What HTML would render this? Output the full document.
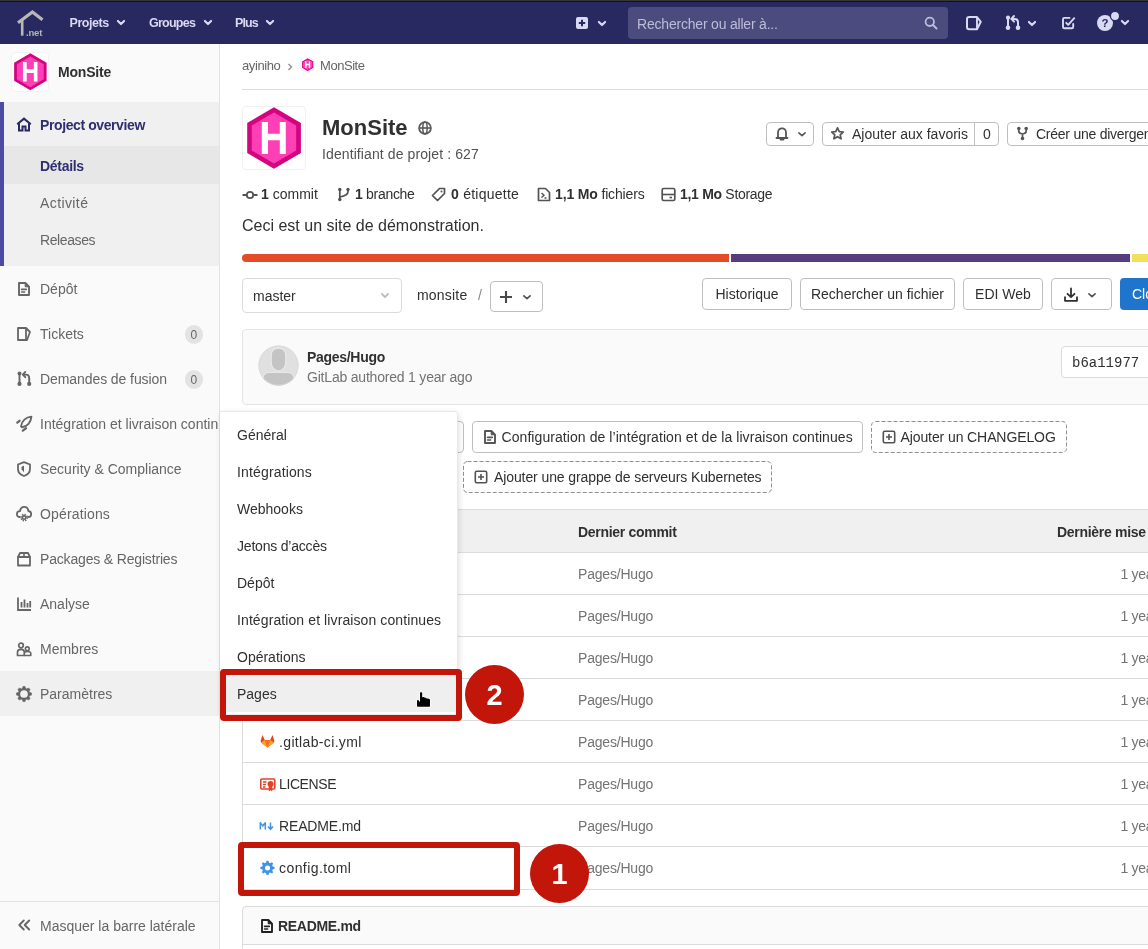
<!DOCTYPE html>
<html><head><meta charset="utf-8">
<style>
*{box-sizing:border-box;margin:0;padding:0}
html,body{width:1148px;height:949px;overflow:hidden;background:#fff;font-family:"Liberation Sans",sans-serif;font-size:14px;color:#303030;position:relative}
#w{position:absolute;left:0;top:0;width:1148px;height:949px;will-change:transform}
.a{position:absolute;white-space:nowrap}
svg.a{overflow:visible}
</style></head><body>

<div id="w">
<div class="a" style="left:0px;top:0px;width:1148px;height:1px;background:#363636"></div>
<div class="a" style="left:0px;top:1px;width:1148px;height:1px;background:#121212"></div>
<div class="a" style="left:0px;top:2px;width:1148px;height:42px;background:#292961"></div>
<svg class="a" style="left:15px;top:9px;" width="30" height="30" viewBox="0 0 30 30"><path d="M3 13.8 L17.4 3 L27.5 10.8" fill="none" stroke="#b8b8b8" stroke-width="3.2" stroke-linejoin="miter"/><path d="M7.2 11 L7.2 26.7" fill="none" stroke="#b8b8b8" stroke-width="2.6"/></svg>
<div class="a" style="left:26px;top:27.66px;font-size:9.5px;line-height:9.5px;font-weight:bold;color:#b5b5b5;letter-spacing:-0.2px">.net</div>
<div class="a" style="left:69.5px;top:17.42px;font-size:12.5px;line-height:12.5px;font-weight:bold;color:#d9d9f2;letter-spacing:-0.45px">Projets</div>
<svg class="a" style="left:116px;top:19px;" width="10" height="7" viewBox="0 0 10 7"><path d="M1.9 1.9 L5.0 5.1 L8.1 1.9" fill="none" stroke="#d9d9f2" stroke-width="2.1" stroke-linecap="round" stroke-linejoin="round"/></svg>
<div class="a" style="left:149px;top:17.42px;font-size:12.5px;line-height:12.5px;font-weight:bold;color:#d9d9f2;letter-spacing:-0.75px">Groupes</div>
<svg class="a" style="left:203px;top:19px;" width="10" height="7" viewBox="0 0 10 7"><path d="M1.9 1.9 L5.0 5.1 L8.1 1.9" fill="none" stroke="#d9d9f2" stroke-width="2.1" stroke-linecap="round" stroke-linejoin="round"/></svg>
<div class="a" style="left:235px;top:17.42px;font-size:12.5px;line-height:12.5px;font-weight:bold;color:#d9d9f2;letter-spacing:-0.9px">Plus</div>
<svg class="a" style="left:265px;top:19px;" width="10" height="7" viewBox="0 0 10 7"><path d="M1.9 1.9 L5.0 5.1 L8.1 1.9" fill="none" stroke="#d9d9f2" stroke-width="2.1" stroke-linecap="round" stroke-linejoin="round"/></svg>
<svg class="a" style="left:576px;top:17px;" width="12" height="12" viewBox="0 0 12 12"><rect x="0" y="0" width="12" height="12" rx="2" fill="#d9d9f2"/><path d="M6 2.8 V9.2 M2.8 6 H9.2" stroke="#292961" stroke-width="2"/></svg>
<svg class="a" style="left:597px;top:19.5px;" width="10" height="7" viewBox="0 0 10 7"><path d="M1.9 1.9 L5.0 5.1 L8.1 1.9" fill="none" stroke="#d9d9f2" stroke-width="2.1" stroke-linecap="round" stroke-linejoin="round"/></svg>
<div class="a" style="left:628px;top:7px;width:320px;height:32px;background:#4c4b7e;border-radius:4px"></div>
<div class="a" style="left:637px;top:16.65px;font-size:14px;line-height:14px;font-weight:normal;color:#bdbcd9;letter-spacing:-0.2px">Rechercher ou aller à...</div>
<svg class="a" style="left:924px;top:16px;" width="14" height="14" viewBox="0 0 14 14"><circle cx="5.8" cy="5.8" r="4.2" fill="none" stroke="#bdbcd9" stroke-width="1.8"/><path d="M9 9 L12.5 12.5" stroke="#bdbcd9" stroke-width="2" stroke-linecap="round"/></svg>
<svg class="a" style="left:966px;top:16px;" width="16" height="15" viewBox="0 0 16 15"><path d="M3.2 1 H11 L14.8 5.8 L11 13.2 H3.2 Q1 13.2 1 11 V3.2 Q1 1 3.2 1 Z" fill="none" stroke="#d9d9f2" stroke-width="2" stroke-linejoin="round"/><path d="M11 1.5 V13" stroke="#d9d9f2" stroke-width="1.9"/></svg>
<svg class="a" style="left:1004px;top:15px;" width="18" height="16" viewBox="0 0 18 16"><circle cx="4" cy="2.7" r="2.1" fill="#d9d9f2"/><path d="M4 2.7 V13" stroke="#d9d9f2" stroke-width="2"/><circle cx="4" cy="12.8" r="2.3" fill="#d9d9f2"/><path d="M10 1 L7.3 3.9 L10 6.6" fill="none" stroke="#d9d9f2" stroke-width="2" stroke-linecap="round" stroke-linejoin="round"/><path d="M8 3.9 H10.5 Q14 3.9 14 7.5 V12.8" fill="none" stroke="#d9d9f2" stroke-width="2"/><circle cx="14" cy="12.8" r="2.3" fill="#d9d9f2"/></svg>
<svg class="a" style="left:1027px;top:19.5px;" width="10" height="7" viewBox="0 0 10 7"><path d="M1.9 1.9 L5.0 5.1 L8.1 1.9" fill="none" stroke="#d9d9f2" stroke-width="2.1" stroke-linecap="round" stroke-linejoin="round"/></svg>
<svg class="a" style="left:1061px;top:16px;" width="16" height="15" viewBox="0 0 16 15"><path d="M8.5 1.9 H3.3 Q2 1.9 2 3.2 V10.9 Q2 12.2 3.3 12.2 H10.9 Q12.2 12.2 12.2 10.9 V8" fill="none" stroke="#d9d9f2" stroke-width="1.9" stroke-linecap="round"/><path d="M5.2 6.8 L7.2 8.8 L13.2 2.2" fill="none" stroke="#d9d9f2" stroke-width="1.9" stroke-linecap="round" stroke-linejoin="round"/></svg>
<svg class="a" style="left:1096px;top:11px;" width="25" height="20" viewBox="0 0 25 20"><circle cx="9" cy="12" r="8" fill="#d9d9f2"/><text x="9" y="16.2" text-anchor="middle" font-family="Liberation Sans" font-weight="bold" font-size="11.5" fill="#292961">?</text><circle cx="19" cy="5" r="4.6" fill="#d9d9f2" stroke="#292961" stroke-width="1.3"/></svg>
<svg class="a" style="left:1120px;top:19px;" width="10" height="7" viewBox="0 0 10 7"><path d="M1.9 1.9 L5.0 5.1 L8.1 1.9" fill="none" stroke="#d9d9f2" stroke-width="2.1" stroke-linecap="round" stroke-linejoin="round"/></svg>
<div class="a" style="left:0px;top:44px;width:220px;height:905px;background:#fafafa;border-right:1px solid #e3e3e3"></div>
<div class="a" style="left:10.5px;top:52.2px;width:38.7px;height:39.5px;background:#fff;border:1px solid #f2f2f2;border-radius:4px"></div>
<svg class="a" style="left:10.5px;top:52.2px;overflow:hidden" width="38.7" height="39.5" viewBox="0 0 64 64"><polygon points="32,1.2 58.9,17 58.9,47 32,62.8 5.2,47 5.2,17" fill="#d3047f"/><polygon points="32,6.6 54.2,19.6 54.2,44.6 32,57.6 9.8,44.6 9.8,19.6" fill="#ff3fb5"/><path d="M19.8 15.9 H26 V27.7 H37.8 V15.9 H43.8 V48.1 H37.8 V34.2 H26 V48.1 H19.8 Z" fill="#fff"/></svg>
<div class="a" style="left:58px;top:65.35px;font-size:14px;line-height:14px;font-weight:bold;color:#303030;letter-spacing:-0.2px">MonSite</div>
<div class="a" style="left:0px;top:102px;width:219px;height:164px;background:#f0f0f0"></div>
<div class="a" style="left:0px;top:102px;width:4px;height:164px;background:#4b4ba3"></div>
<div class="a" style="left:4px;top:146px;width:215px;height:38px;background:#e7e7e7"></div>
<svg class="a" style="left:16px;top:117px;" width="16" height="15" viewBox="0 0 16 15"><path d="M1.2 7.2 L8 1.6 L14.8 7.2" fill="none" stroke="#292961" stroke-width="2.1" stroke-linejoin="miter"/><path d="M3 6.2 V13.5 H6.5 V9.5 H9.5 V13.5 H13 V6.2" fill="none" stroke="#292961" stroke-width="2"/></svg>
<div class="a" style="left:40px;top:118.45px;font-size:14px;line-height:14px;font-weight:bold;color:#2e2e70;letter-spacing:-0.4px">Project overview</div>
<div class="a" style="left:40px;top:158.95px;font-size:14px;line-height:14px;font-weight:bold;color:#2e2e70;letter-spacing:-0.3px">Détails</div>
<div class="a" style="left:40px;top:195.95px;font-size:14px;line-height:14px;font-weight:normal;color:#666;letter-spacing:0.4px">Activité</div>
<div class="a" style="left:40px;top:232.95px;font-size:14px;line-height:14px;font-weight:normal;color:#666;letter-spacing:-0.4px">Releases</div>
<div class="a" style="left:0px;top:671px;width:219px;height:45px;background:#f0f0f0"></div>
<div class="a" style="left:40px;top:282.15px;font-size:14px;line-height:14px;font-weight:normal;color:#666;letter-spacing:0px;">Dépôt</div>
<div class="a" style="left:40px;top:327.15px;font-size:14px;line-height:14px;font-weight:normal;color:#666;letter-spacing:0px;">Tickets</div>
<div class="a" style="left:40px;top:372.15px;font-size:14px;line-height:14px;font-weight:normal;color:#666;letter-spacing:-0.08px;">Demandes de fusion</div>
<div class="a" style="left:40px;top:417.15px;font-size:14px;line-height:14px;font-weight:normal;color:#666;letter-spacing:0px;width:179px;height:20px;overflow:hidden">Intégration et livraison continues</div>
<div class="a" style="left:40px;top:462.15px;font-size:14px;line-height:14px;font-weight:normal;color:#666;letter-spacing:0px;">Security &amp; Compliance</div>
<div class="a" style="left:40px;top:507.15px;font-size:14px;line-height:14px;font-weight:normal;color:#666;letter-spacing:0.15px;">Opérations</div>
<div class="a" style="left:40px;top:552.15px;font-size:14px;line-height:14px;font-weight:normal;color:#666;letter-spacing:-0.17px;">Packages &amp; Registries</div>
<div class="a" style="left:40px;top:597.15px;font-size:14px;line-height:14px;font-weight:normal;color:#666;letter-spacing:0px;">Analyse</div>
<div class="a" style="left:40px;top:642.15px;font-size:14px;line-height:14px;font-weight:normal;color:#666;letter-spacing:0px;">Membres</div>
<div class="a" style="left:40px;top:687.15px;font-size:14px;line-height:14px;font-weight:normal;color:#666;letter-spacing:0px;">Paramètres</div>
<svg class="a" style="left:18px;top:282px;" width="12" height="14" viewBox="0 0 12 14"><path d="M1 1 H7.4 L11 4.6 V13 H1 Z" fill="none" stroke="#666" stroke-width="1.9" stroke-linejoin="round"/><path d="M7.2 1 V4.8 H11 Z" fill="#666" stroke="#666" stroke-width="1" stroke-linejoin="round"/><path d="M3.6 7.4 H8.3 M3.6 10 H6.6" stroke="#666" stroke-width="1.6" stroke-linecap="round"/></svg>
<svg class="a" style="left:16px;top:326px;" width="16" height="16" viewBox="0 0 16 16"><path d="M2 2 H10 L14 6 L11 14 H2 Z" fill="none" stroke="#666" stroke-width="1.8" stroke-linejoin="round"/><path d="M10 2 V14" stroke="#666" stroke-width="1.8"/></svg>
<svg class="a" style="left:16px;top:371px;" width="16" height="16" viewBox="0 0 16 16"><circle cx="3.5" cy="2.6" r="2" fill="#666"/><path d="M3.5 2.6 V13" stroke="#666" stroke-width="1.9"/><circle cx="3.5" cy="12.9" r="2.1" fill="#666"/><path d="M9.3 0.9 L6.8 3.6 L9.3 6.2" fill="none" stroke="#666" stroke-width="1.9" stroke-linecap="round" stroke-linejoin="round"/><path d="M7.5 3.6 H9.8 Q13.2 3.6 13.2 7 V12.9" fill="none" stroke="#666" stroke-width="1.9"/><circle cx="13.2" cy="12.9" r="2.1" fill="#666"/></svg>
<svg class="a" style="left:16px;top:416px;" width="16" height="16" viewBox="0 0 16 16"><path d="M15.4 0.6 C10 1 5.6 5 5 10.3 L6 11.3 C11.2 10.7 15 6.2 15.4 0.6 Z" fill="none" stroke="#666" stroke-width="1.9" stroke-linejoin="round"/><path d="M1.3 6.6 L3.6 4.8 M6.8 14.6 L10 12.3" stroke="#666" stroke-width="2.3" stroke-linecap="round"/></svg>
<svg class="a" style="left:16px;top:461px;" width="16" height="16" viewBox="0 0 16 16"><path d="M8 1.2 L14 3.5 V8 C14 11.5 11 14 8 15 C5 14 2 11.5 2 8 V3.5 Z" fill="none" stroke="#666" stroke-width="1.8" stroke-linejoin="round"/><path d="M8 4.6 V11.2 L5.6 8.6 L5.4 6 Z" fill="#666"/></svg>
<svg class="a" style="left:16px;top:506px;" width="16" height="16" viewBox="0 0 16 16"><path d="M3.8 11 C1.7 11 0.9 9.6 0.9 8.2 C0.9 6.5 2.1 5.2 3.9 5.2 C4.4 2.5 6.1 0.9 8.2 0.9 C10.4 0.9 12.1 2.5 12.4 5 C14.2 5.2 15.2 6.5 15.2 8.2 C15.2 9.7 14.4 11 12.3 11" fill="none" stroke="#666" stroke-width="1.8" stroke-linecap="round"/><circle cx="8.1" cy="11.6" r="1.7" fill="none" stroke="#666" stroke-width="1.6"/><circle cx="8.1" cy="11.6" r="3.1" fill="none" stroke="#666" stroke-width="1.5" stroke-dasharray="1.4 1.03"/></svg>
<svg class="a" style="left:16px;top:551px;" width="16" height="16" viewBox="0 0 16 16"><path d="M2 6 H14 V14.5 H2 Z" fill="none" stroke="#666" stroke-width="1.8" stroke-linejoin="round"/><path d="M2 6 L4 2 H12 L14 6" fill="none" stroke="#666" stroke-width="1.8" stroke-linejoin="round"/><path d="M8 2 V6" stroke="#666" stroke-width="1.6"/></svg>
<svg class="a" style="left:16px;top:596px;" width="16" height="16" viewBox="0 0 16 16"><path d="M2 1.5 V14 H15" fill="none" stroke="#666" stroke-width="1.8"/><path d="M5.5 6 V11.5 M8.5 3.5 V11.5 M11.5 7 V11.5 M14.2 5 V11.5" stroke="#666" stroke-width="1.8"/></svg>
<svg class="a" style="left:16px;top:641px;" width="16" height="16" viewBox="0 0 16 16"><circle cx="5" cy="4.5" r="2.3" fill="none" stroke="#666" stroke-width="1.7"/><circle cx="11.3" cy="7.8" r="1.9" fill="none" stroke="#666" stroke-width="1.6"/><path d="M1.5 14.5 V11 C1.5 9.3 2.8 8.3 5 8.3 C7 8.3 8.3 9.3 8.3 11 V14.5 Z" fill="none" stroke="#666" stroke-width="1.7" stroke-linejoin="round"/><path d="M8.3 14.5 H14.8 V12.5 C14.8 11 13.5 10.5 11.5 10.5 C10.2 10.5 9.2 10.8 8.6 11.3" fill="none" stroke="#666" stroke-width="1.6" stroke-linejoin="round"/></svg>
<svg class="a" style="left:16px;top:686px;" width="16" height="16" viewBox="0 0 16 16"><path d="M6.22 3.11 L6.94 0.47 L9.06 0.47 L9.78 3.11 L10.20 3.29 L12.57 1.93 L14.07 3.43 L12.71 5.80 L12.89 6.22 L15.53 6.94 L15.53 9.06 L12.89 9.78 L12.71 10.20 L14.07 12.57 L12.57 14.07 L10.20 12.71 L9.78 12.89 L9.06 15.53 L6.94 15.53 L6.22 12.89 L5.80 12.71 L3.43 14.07 L1.93 12.57 L3.29 10.20 L3.11 9.78 L0.47 9.06 L0.47 6.94 L3.11 6.22 L3.29 5.80 L1.93 3.43 L3.43 1.93 L5.80 3.29 Z" fill="#666" stroke="#666" stroke-width="0.6" stroke-linejoin="round"/><circle cx="8" cy="8" r="4.9" fill="none" stroke="#666" stroke-width="2.1"/><circle cx="8" cy="8" r="3.85" fill="#f0f0f0"/></svg>
<div class="a" style="left:185px;top:325px;width:18px;height:19px;background:#e3e3e3;border-radius:9px"></div>
<div class="a" style="left:190.5px;top:328.84px;font-size:12px;line-height:12px;font-weight:normal;color:#666;">0</div>
<div class="a" style="left:185px;top:370px;width:18px;height:19px;background:#e3e3e3;border-radius:9px"></div>
<div class="a" style="left:190.5px;top:373.84px;font-size:12px;line-height:12px;font-weight:normal;color:#666;">0</div>
<div class="a" style="left:0px;top:901px;width:219px;height:1px;background:#e3e3e3"></div>
<svg class="a" style="left:17px;top:918px;" width="14" height="14" viewBox="0 0 14 14"><path d="M6.8 2.5 L2.3 7 L6.8 11.5 M12.2 2.5 L7.7 7 L12.2 11.5" fill="none" stroke="#666" stroke-width="1.9" stroke-linecap="round" stroke-linejoin="round"/></svg>
<div class="a" style="left:40px;top:919.15px;font-size:14px;line-height:14px;font-weight:normal;color:#666;">Masquer la barre latérale</div>
<div class="a" style="left:242px;top:59.00px;font-size:13px;line-height:13px;font-weight:normal;color:#666;letter-spacing:-0.4px">ayiniho</div>
<svg class="a" style="left:286px;top:63px;" width="8" height="8" viewBox="0 0 8 8"><path d="M2.5 1 L5.5 4 L2.5 7" fill="none" stroke="#888" stroke-width="1.2"/></svg>
<svg class="a" style="left:299px;top:56px;" width="17" height="17" viewBox="0 0 17 17"><circle cx="8.4" cy="8.5" r="7.6" fill="#fff" stroke="#ececec" stroke-width="0.8"/></svg>
<svg class="a" style="left:300.7px;top:57.8px;overflow:hidden" width="13.4" height="13.4" viewBox="0 0 64 64"><polygon points="32,1.2 58.9,17 58.9,47 32,62.8 5.2,47 5.2,17" fill="#d3047f"/><polygon points="32,6.6 54.2,19.6 54.2,44.6 32,57.6 9.8,44.6 9.8,19.6" fill="#ff3fb5"/><path d="M19.8 15.9 H26 V27.7 H37.8 V15.9 H43.8 V48.1 H37.8 V34.2 H26 V48.1 H19.8 Z" fill="#fff"/></svg>
<div class="a" style="left:320px;top:59.00px;font-size:13px;line-height:13px;font-weight:normal;color:#666;letter-spacing:-0.45px">MonSite</div>
<div class="a" style="left:242px;top:89px;width:906px;height:1px;background:#dcdcdc"></div>
<div class="a" style="left:242px;top:106px;width:64px;height:64px;background:#fff;border:1px solid #f0f0f0;border-radius:4px"></div>
<svg class="a" style="left:242px;top:106px;overflow:hidden" width="64" height="64" viewBox="0 0 64 64"><polygon points="32,1.2 58.9,17 58.9,47 32,62.8 5.2,47 5.2,17" fill="#d3047f"/><polygon points="32,6.6 54.2,19.6 54.2,44.6 32,57.6 9.8,44.6 9.8,19.6" fill="#ff3fb5"/><path d="M19.8 15.9 H26 V27.7 H37.8 V15.9 H43.8 V48.1 H37.8 V34.2 H26 V48.1 H19.8 Z" fill="#fff"/></svg>
<div class="a" style="left:322px;top:116.58px;font-size:22px;line-height:22px;font-weight:bold;color:#303030;">MonSite</div>
<svg class="a" style="left:418px;top:121px;" width="14" height="14" viewBox="0 0 14 14"><circle cx="7" cy="7" r="5.9" fill="none" stroke="#5a5a5a" stroke-width="1.8"/><path d="M1.5 7 H12.5" stroke="#5a5a5a" stroke-width="1.6"/><ellipse cx="7" cy="7" rx="2.2" ry="5.9" fill="none" stroke="#5a5a5a" stroke-width="1.5"/></svg>
<div class="a" style="left:322px;top:147.15px;font-size:14px;line-height:14px;font-weight:normal;color:#525252;letter-spacing:0.1px">Identifiant de projet : 627</div>
<div class="a" style="left:766px;top:122px;width:48px;height:24px;background:#fff;border:1px solid #bfbfbf;border-radius:4px"></div>
<svg class="a" style="left:775px;top:126px;" width="14" height="15" viewBox="0 0 14 15"><path d="M3 11 V6.5 C3 4 4.8 2.3 7 2.3 C9.2 2.3 11 4 11 6.5 V11 L12.5 12 H1.5 Z" fill="none" stroke="#555" stroke-width="1.8" stroke-linejoin="round"/><path d="M5.5 13.5 H8.5" stroke="#555" stroke-width="1.8" stroke-linecap="round"/></svg>
<svg class="a" style="left:797px;top:131px;" width="10" height="6.5" viewBox="0 0 10 6.5"><path d="M1.9 1.9 L5.0 4.6 L8.1 1.9" fill="none" stroke="#555" stroke-width="1.6" stroke-linecap="round" stroke-linejoin="round"/></svg>
<div class="a" style="left:822px;top:122px;width:177px;height:24px;background:#fff;border:1px solid #bfbfbf;border-radius:4px"></div>
<div class="a" style="left:974px;top:122px;width:1px;height:24px;background:#bfbfbf"></div>
<svg class="a" style="left:830px;top:126px;" width="15" height="15" viewBox="0 0 15 15"><path d="M7.5 1.8 L9.3 5.6 L13.3 6 L10.2 8.8 L11.1 12.8 L7.5 10.7 L3.9 12.8 L4.8 8.8 L1.7 6 L5.7 5.6 Z" fill="none" stroke="#555" stroke-width="1.7" stroke-linejoin="round"/></svg>
<div class="a" style="left:852px;top:126.75px;font-size:14px;line-height:14px;font-weight:normal;color:#303030;letter-spacing:0px">Ajouter aux favoris</div>
<div class="a" style="left:983px;top:126.75px;font-size:14px;line-height:14px;font-weight:normal;color:#303030;">0</div>
<div class="a" style="left:1007px;top:122px;width:153px;height:24px;background:#fff;border:1px solid #bfbfbf;border-radius:4px"></div>
<svg class="a" style="left:1016px;top:126px;" width="13" height="15" viewBox="0 0 13 15"><circle cx="2.8" cy="2.5" r="1.8" fill="#555"/><circle cx="10.2" cy="2.5" r="1.8" fill="#555"/><circle cx="6.5" cy="12.5" r="1.8" fill="#555"/><path d="M2.8 3 V5 Q2.8 7 5 7.5 L6.5 8 L8 7.5 Q10.2 7 10.2 5 V3 M6.5 8 V12" fill="none" stroke="#555" stroke-width="1.7"/></svg>
<div class="a" style="left:1036px;top:126.75px;font-size:14px;line-height:14px;font-weight:normal;color:#303030;letter-spacing:-0.25px">Créer une divergence</div>
<svg class="a" style="left:242px;top:188.5px;" width="16" height="12" viewBox="0 0 16 12"><circle cx="8" cy="6" r="3.2" fill="none" stroke="#525252" stroke-width="1.8"/><path d="M0.5 6 H4.8 M11.2 6 H15.5" stroke="#525252" stroke-width="1.8"/></svg>
<div class="a" style="left:261px;top:186.95px;font-size:14px;line-height:14px;font-weight:normal;color:#303030;"><b>1</b> commit</div>
<svg class="a" style="left:337px;top:186.5px;" width="14" height="15" viewBox="0 0 14 15"><circle cx="2.8" cy="2.5" r="1.7" fill="#525252"/><circle cx="2.8" cy="12.5" r="1.7" fill="#525252"/><circle cx="11" cy="2.5" r="1.7" fill="#525252"/><path d="M2.8 3 V12 M11 3 V4.5 Q11 8.5 3 10" fill="none" stroke="#525252" stroke-width="1.7"/></svg>
<div class="a" style="left:355px;top:186.95px;font-size:14px;line-height:14px;font-weight:normal;color:#303030;letter-spacing:-0.3px"><b>1</b> branche</div>
<svg class="a" style="left:431px;top:187px;" width="15" height="15" viewBox="0 0 15 15"><path d="M8.5 1.5 H13.5 V6.5 L6.5 13.5 L1.5 8.5 Z" fill="none" stroke="#525252" stroke-width="1.7" stroke-linejoin="round"/><circle cx="10.5" cy="4.5" r="1" fill="#525252"/></svg>
<div class="a" style="left:451px;top:186.95px;font-size:14px;line-height:14px;font-weight:normal;color:#303030;letter-spacing:0.25px"><b>0</b> étiquette</div>
<svg class="a" style="left:537px;top:187px;" width="14" height="15" viewBox="0 0 14 15"><path d="M1.5 1.5 H8.5 L12.5 5.5 V13.5 H1.5 Z" fill="none" stroke="#525252" stroke-width="1.7" stroke-linejoin="round"/><path d="M4.5 6 L7 8.3 L4.5 10.6 M7.5 11 H9.5" fill="none" stroke="#525252" stroke-width="1.4"/></svg>
<div class="a" style="left:555px;top:186.95px;font-size:14px;line-height:14px;font-weight:normal;color:#303030;letter-spacing:-0.15px"><b>1,1 Mo</b> fichiers</div>
<svg class="a" style="left:661px;top:187px;" width="15" height="15" viewBox="0 0 15 15"><rect x="1.2" y="1.5" width="12.6" height="12" rx="1.5" fill="none" stroke="#525252" stroke-width="1.7"/><path d="M1.5 7.5 H13.5" stroke="#525252" stroke-width="1.6"/><path d="M8.5 10.5 H11" stroke="#525252" stroke-width="1.6"/></svg>
<div class="a" style="left:680px;top:186.95px;font-size:14px;line-height:14px;font-weight:normal;color:#303030;letter-spacing:-0.3px"><b>1,1 Mo</b> Storage</div>
<div class="a" style="left:242px;top:218.46px;font-size:16px;line-height:16px;font-weight:normal;color:#303030;">Ceci est un site de démonstration.</div>
<div class="a" style="left:242px;top:254px;width:487px;height:8px;background:#e34c26;border-radius:4px 0 0 4px"></div>
<div class="a" style="left:731px;top:254px;width:399px;height:8px;background:#563d7c"></div>
<div class="a" style="left:1132px;top:254px;width:16px;height:8px;background:#f1e05a"></div>
<div class="a" style="left:242px;top:278px;width:160px;height:35px;background:#fff;border:1px solid #dbdbdb;border-radius:4px"></div>
<div class="a" style="left:253px;top:288.85px;font-size:14px;line-height:14px;font-weight:normal;color:#303030;">master</div>
<svg class="a" style="left:380px;top:292px;" width="10" height="7" viewBox="0 0 10 7"><path d="M1.9 1.9 L5.0 5.1 L8.1 1.9" fill="none" stroke="#bbb" stroke-width="1.9" stroke-linecap="round" stroke-linejoin="round"/></svg>
<div class="a" style="left:417px;top:288.15px;font-size:14px;line-height:14px;font-weight:normal;color:#303030;letter-spacing:0.2px">monsite</div>
<div class="a" style="left:478px;top:288.15px;font-size:14px;line-height:14px;font-weight:normal;color:#888;">/</div>
<div class="a" style="left:490px;top:281px;width:53px;height:31px;background:#fff;border:1px solid #bfbfbf;border-radius:4px"></div>
<svg class="a" style="left:499px;top:290px;" width="14" height="14" viewBox="0 0 14 14"><path d="M7 1 V13 M1 7 H13" stroke="#4a4a4a" stroke-width="2.1"/></svg>
<svg class="a" style="left:522px;top:293.5px;" width="10" height="6.5" viewBox="0 0 10 6.5"><path d="M1.9 1.9 L5.0 4.6 L8.1 1.9" fill="none" stroke="#555" stroke-width="1.8" stroke-linecap="round" stroke-linejoin="round"/></svg>
<div class="a" style="left:702px;top:278px;width:90px;height:32px;background:#fff;border:1px solid #bfbfbf;border-radius:4px"></div>
<div class="a" style="left:702px;top:286.85px;font-size:14px;line-height:14px;font-weight:normal;color:#303030;width:90px;text-align:center">Historique</div>
<div class="a" style="left:800px;top:278px;width:155px;height:32px;background:#fff;border:1px solid #bfbfbf;border-radius:4px"></div>
<div class="a" style="left:800px;top:286.85px;font-size:14px;line-height:14px;font-weight:normal;color:#303030;width:155px;text-align:center">Rechercher un fichier</div>
<div class="a" style="left:963px;top:278px;width:80px;height:32px;background:#fff;border:1px solid #bfbfbf;border-radius:4px"></div>
<div class="a" style="left:963px;top:286.85px;font-size:14px;line-height:14px;font-weight:normal;color:#303030;width:80px;text-align:center">EDI Web</div>
<div class="a" style="left:1051px;top:278px;width:61px;height:32px;background:#fff;border:1px solid #bfbfbf;border-radius:4px"></div>
<svg class="a" style="left:1063px;top:286.5px;" width="16" height="16" viewBox="0 0 16 16"><path d="M8 1.5 V10 M4.5 6.8 L8 10.2 L11.5 6.8" fill="none" stroke="#303030" stroke-width="1.8" stroke-linecap="round" stroke-linejoin="round"/><path d="M2 9.5 V13.8 H14 V9.5" fill="none" stroke="#303030" stroke-width="1.8" stroke-linejoin="round"/></svg>
<svg class="a" style="left:1087px;top:292px;" width="10" height="6.5" viewBox="0 0 10 6.5"><path d="M1.9 1.9 L5.0 4.6 L8.1 1.9" fill="none" stroke="#555" stroke-width="1.7" stroke-linecap="round" stroke-linejoin="round"/></svg>
<div class="a" style="left:1120px;top:278px;width:80px;height:32px;background:#1f75cb;border-radius:4px"></div>
<div class="a" style="left:1132px;top:287.05px;font-size:14px;line-height:14px;font-weight:normal;color:#fff;">Cloner</div>
<div class="a" style="left:242px;top:329px;width:918px;height:76px;background:#fafafa;border:1px solid #e5e5e5;border-radius:4px"></div>
<svg class="a" style="left:258px;top:345px;" width="41" height="41" viewBox="0 0 41 41"><defs><clipPath id="cc"><circle cx="20.5" cy="20.5" r="20"/></clipPath></defs><circle cx="20.5" cy="20.5" r="20" fill="#e0e0e0"/><g clip-path="url(#cc)"><path d="M5 42 V33.5 Q5 27.5 12 27.5 H29 Q36 27.5 36 33.5 V42 Z" fill="#c4c4c4" stroke="#e9e9e9" stroke-width="1.2"/><path d="M13.2 11 Q13.2 3.2 20.5 3.2 Q27.8 3.2 27.8 11 V17 Q27.8 22 24 24.8 Q20.5 27 17 24.8 Q13.2 22 13.2 17 Z" fill="#c4c4c4" stroke="#e9e9e9" stroke-width="1.2"/></g><circle cx="20.5" cy="20.5" r="19.6" fill="none" stroke="#d8d8d8" stroke-width="0.8"/></svg>
<div class="a" style="left:307px;top:349.55px;font-size:14px;line-height:14px;font-weight:bold;color:#303030;letter-spacing:-0.3px">Pages/Hugo</div>
<div class="a" style="left:307px;top:370.45px;font-size:14px;line-height:14px;font-weight:normal;color:#737373;letter-spacing:-0.2px">GitLab authored 1 year ago</div>
<div class="a" style="left:1061px;top:346px;width:99px;height:32px;background:#fff;border:1px solid #dbdbdb;border-radius:4px"></div>
<div class="a" style="left:1072px;top:355.65px;font-size:14px;line-height:14px;font-weight:normal;color:#303030;font-family:Liberation Mono,monospace;letter-spacing:0px">b6a11977</div>
<div class="a" style="left:330px;top:421px;width:134px;height:32px;background:#fff;border:1px solid #bfbfbf;border-radius:4px"></div>
<div class="a" style="left:472px;top:421px;width:391px;height:32px;background:#fff;border:1px solid #bfbfbf;border-radius:4px"></div>
<svg class="a" style="left:484px;top:430px;" width="12" height="14" viewBox="0 0 12 14"><path d="M1 1 H7.4 L11 4.6 V13 H1 Z" fill="none" stroke="#555" stroke-width="1.9" stroke-linejoin="round"/><path d="M7.2 1 V4.8 H11 Z" fill="#555" stroke="#555" stroke-width="1" stroke-linejoin="round"/><path d="M3.6 7.4 H8.3 M3.6 10 H6.6" stroke="#555" stroke-width="1.6" stroke-linecap="round"/></svg>
<div class="a" style="left:501.5px;top:430.35px;font-size:14px;line-height:14px;font-weight:normal;color:#303030;letter-spacing:0.07px">Configuration de l’intégration et de la livraison continues</div>
<svg class="a" style="left:871px;top:421px;" width="196" height="32" viewBox="0 0 196 32"><rect x="0.5" y="0.5" width="195" height="31" rx="4" fill="#fff" stroke="#8f8f8f" stroke-dasharray="4 2"/></svg>
<svg class="a" style="left:882px;top:430px;" width="14" height="14" viewBox="0 0 14 14"><rect x="1.3" y="1.3" width="11.4" height="11.4" rx="1.5" fill="none" stroke="#525252" stroke-width="1.6"/><path d="M7 4 V10 M4 7 H10" stroke="#525252" stroke-width="1.6"/></svg>
<div class="a" style="left:900.5px;top:430.35px;font-size:14px;line-height:14px;font-weight:normal;color:#303030;letter-spacing:-0.1px">Ajouter un CHANGELOG</div>
<svg class="a" style="left:463px;top:461px;" width="309" height="32" viewBox="0 0 309 32"><rect x="0.5" y="0.5" width="308" height="31" rx="4" fill="#fff" stroke="#8f8f8f" stroke-dasharray="4 2"/></svg>
<svg class="a" style="left:474px;top:470px;" width="14" height="14" viewBox="0 0 14 14"><rect x="1.3" y="1.3" width="11.4" height="11.4" rx="1.5" fill="none" stroke="#525252" stroke-width="1.6"/><path d="M7 4 V10 M4 7 H10" stroke="#525252" stroke-width="1.6"/></svg>
<div class="a" style="left:494px;top:470.35px;font-size:14px;line-height:14px;font-weight:normal;color:#303030;letter-spacing:-0.1px">Ajouter une grappe de serveurs Kubernetes</div>
<div class="a" style="left:242px;top:509px;width:918px;height:381px;background:#fff;border:1px solid #dbdbdb;border-radius:4px 4px 0 0"></div>
<div class="a" style="left:243px;top:510px;width:905px;height:42px;background:#f0f0f0"></div>
<div class="a" style="left:243px;top:552px;width:905px;height:1px;background:#dbdbdb"></div>
<div class="a" style="left:243px;top:594px;width:905px;height:1px;background:#dbdbdb"></div>
<div class="a" style="left:243px;top:636px;width:905px;height:1px;background:#dbdbdb"></div>
<div class="a" style="left:243px;top:678px;width:905px;height:1px;background:#dbdbdb"></div>
<div class="a" style="left:243px;top:720px;width:905px;height:1px;background:#dbdbdb"></div>
<div class="a" style="left:243px;top:762px;width:905px;height:1px;background:#dbdbdb"></div>
<div class="a" style="left:243px;top:804px;width:905px;height:1px;background:#dbdbdb"></div>
<div class="a" style="left:243px;top:846px;width:905px;height:1px;background:#dbdbdb"></div>
<div class="a" style="left:578px;top:525.15px;font-size:14px;line-height:14px;font-weight:bold;color:#303030;letter-spacing:-0.3px">Dernier commit</div>
<div class="a" style="left:1057px;top:525.15px;font-size:14px;line-height:14px;font-weight:bold;color:#303030;letter-spacing:-0.3px">Dernière mise à jour</div>
<div class="a" style="left:578px;top:566.65px;font-size:14px;line-height:14px;font-weight:normal;color:#737373;letter-spacing:-0.2px">Pages/Hugo</div>
<div class="a" style="left:1120.5px;top:566.65px;font-size:14px;line-height:14px;font-weight:normal;color:#737373;letter-spacing:-0.3px">1 year ago</div>
<div class="a" style="left:578px;top:608.65px;font-size:14px;line-height:14px;font-weight:normal;color:#737373;letter-spacing:-0.2px">Pages/Hugo</div>
<div class="a" style="left:1120.5px;top:608.65px;font-size:14px;line-height:14px;font-weight:normal;color:#737373;letter-spacing:-0.3px">1 year ago</div>
<div class="a" style="left:578px;top:650.65px;font-size:14px;line-height:14px;font-weight:normal;color:#737373;letter-spacing:-0.2px">Pages/Hugo</div>
<div class="a" style="left:1120.5px;top:650.65px;font-size:14px;line-height:14px;font-weight:normal;color:#737373;letter-spacing:-0.3px">1 year ago</div>
<div class="a" style="left:578px;top:692.65px;font-size:14px;line-height:14px;font-weight:normal;color:#737373;letter-spacing:-0.2px">Pages/Hugo</div>
<div class="a" style="left:1120.5px;top:692.65px;font-size:14px;line-height:14px;font-weight:normal;color:#737373;letter-spacing:-0.3px">1 year ago</div>
<div class="a" style="left:578px;top:734.65px;font-size:14px;line-height:14px;font-weight:normal;color:#737373;letter-spacing:-0.2px">Pages/Hugo</div>
<div class="a" style="left:1120.5px;top:734.65px;font-size:14px;line-height:14px;font-weight:normal;color:#737373;letter-spacing:-0.3px">1 year ago</div>
<div class="a" style="left:279px;top:734.65px;font-size:14px;line-height:14px;font-weight:normal;color:#303030;letter-spacing:0.35px">.gitlab-ci.yml</div>
<div class="a" style="left:578px;top:776.65px;font-size:14px;line-height:14px;font-weight:normal;color:#737373;letter-spacing:-0.2px">Pages/Hugo</div>
<div class="a" style="left:1120.5px;top:776.65px;font-size:14px;line-height:14px;font-weight:normal;color:#737373;letter-spacing:-0.3px">1 year ago</div>
<div class="a" style="left:279px;top:776.65px;font-size:14px;line-height:14px;font-weight:normal;color:#303030;letter-spacing:-0.4px">LICENSE</div>
<div class="a" style="left:578px;top:818.65px;font-size:14px;line-height:14px;font-weight:normal;color:#737373;letter-spacing:-0.2px">Pages/Hugo</div>
<div class="a" style="left:1120.5px;top:818.65px;font-size:14px;line-height:14px;font-weight:normal;color:#737373;letter-spacing:-0.3px">1 year ago</div>
<div class="a" style="left:279px;top:818.65px;font-size:14px;line-height:14px;font-weight:normal;color:#303030;letter-spacing:-0.15px">README.md</div>
<div class="a" style="left:578px;top:860.65px;font-size:14px;line-height:14px;font-weight:normal;color:#737373;letter-spacing:-0.2px">Pages/Hugo</div>
<div class="a" style="left:1120.5px;top:860.65px;font-size:14px;line-height:14px;font-weight:normal;color:#737373;letter-spacing:-0.3px">1 year ago</div>
<div class="a" style="left:279px;top:860.65px;font-size:14px;line-height:14px;font-weight:normal;color:#303030;letter-spacing:0.42px">config.toml</div>
<svg class="a" style="left:259.5px;top:734px;" width="15" height="14" viewBox="0 0 15 14"><path d="M7.5 13.5 L1 8.5 L0.6 7 L2.5 1 L4.8 6 H10.2 L12.5 1 L14.4 7 L14 8.5 Z" fill="#e24329"/><path d="M7.5 13.5 L4.8 6 H10.2 Z" fill="#fc6d26"/><path d="M1 8.5 L4.8 6 L7.5 13.5 Z" fill="#fca326"/><path d="M14 8.5 L10.2 6 L7.5 13.5 Z" fill="#fca326"/></svg>
<svg class="a" style="left:259.5px;top:777.5px;" width="16" height="15" viewBox="0 0 16 15"><rect x="0.8" y="1" width="14" height="10" rx="1" fill="none" stroke="#e24329" stroke-width="1.6"/><path d="M3 4 H6.5 M3 6.5 H6 M3 9 H5.5" stroke="#e24329" stroke-width="1.3"/><circle cx="10.5" cy="6" r="3" fill="#e24329"/><path d="M8.8 8 L8.8 13.5 L10.5 12.3 L12.2 13.5 V8" fill="#e24329"/></svg>
<svg class="a" style="left:258.5px;top:821px;" width="16" height="10" viewBox="0 0 16 10"><path d="M1.3 8.5 V1.8 L3.8 5 L6.3 1.8 V8.5" fill="none" stroke="#3f95e6" stroke-width="1.5" stroke-linejoin="round"/><path d="M11.5 1.5 V7.5 M9 5.5 L11.5 8.3 L14 5.5" fill="none" stroke="#3f95e6" stroke-width="1.5"/></svg>
<svg class="a" style="left:259.5px;top:860px;" width="15" height="15" viewBox="0 0 15 15"><path d="M6.5 0.8 H8.5 L8.9 2.6 L10.2 3.2 L11.8 2.2 L13.2 3.6 L12.2 5.2 L12.8 6.5 L14.6 6.9 V8.9 L12.8 9.3 L12.2 10.6 L13.2 12.2 L11.8 13.6 L10.2 12.6 L8.9 13.2 L8.5 15 H6.5 L6.1 13.2 L4.8 12.6 L3.2 13.6 L1.8 12.2 L2.8 10.6 L2.2 9.3 L0.4 8.9 V6.9 L2.2 6.5 L2.8 5.2 L1.8 3.6 L3.2 2.2 L4.8 3.2 L6.1 2.6 Z" fill="#3f94e8"/><circle cx="7.5" cy="7.9" r="2.5" fill="#fff"/></svg>
<div class="a" style="left:242px;top:906px;width:918px;height:43px;background:#fafafa;border:1px solid #dbdbdb;border-radius:4px 4px 0 0"></div>
<div class="a" style="left:243px;top:944px;width:905px;height:1px;background:#dbdbdb"></div>
<svg class="a" style="left:261px;top:919px;" width="12" height="14" viewBox="0 0 12 14"><path d="M1 1 H7.4 L11 4.6 V13 H1 Z" fill="none" stroke="#222" stroke-width="1.9" stroke-linejoin="round"/><path d="M7.2 1 V4.8 H11 Z" fill="#222" stroke="#222" stroke-width="1" stroke-linejoin="round"/><path d="M3.6 7.4 H8.3 M3.6 10 H6.6" stroke="#222" stroke-width="1.6" stroke-linecap="round"/></svg>
<div class="a" style="left:243px;top:945px;width:905px;height:4px;background:#fff"></div>
<div class="a" style="left:278px;top:919.15px;font-size:14px;line-height:14px;font-weight:bold;color:#303030;letter-spacing:-0.3px">README.md</div>
<div class="a" style="left:220px;top:411px;width:238px;height:304px;background:#fff;box-shadow:1px 2px 6px rgba(0,0,0,0.13);border:1px solid #e8e8e8;border-left:none;border-radius:0 4px 4px 4px"></div>
<div class="a" style="left:221px;top:674px;width:236px;height:38px;background:#efefef"></div>
<div class="a" style="left:237px;top:427.85px;font-size:14px;line-height:14px;font-weight:normal;color:#303030;letter-spacing:0px">Général</div>
<div class="a" style="left:237px;top:464.85px;font-size:14px;line-height:14px;font-weight:normal;color:#303030;letter-spacing:0.15px">Intégrations</div>
<div class="a" style="left:237px;top:501.85px;font-size:14px;line-height:14px;font-weight:normal;color:#303030;letter-spacing:0px">Webhooks</div>
<div class="a" style="left:237px;top:538.85px;font-size:14px;line-height:14px;font-weight:normal;color:#303030;letter-spacing:-0.2px">Jetons d’accès</div>
<div class="a" style="left:237px;top:575.85px;font-size:14px;line-height:14px;font-weight:normal;color:#303030;letter-spacing:0px">Dépôt</div>
<div class="a" style="left:237px;top:612.85px;font-size:14px;line-height:14px;font-weight:normal;color:#303030;letter-spacing:0.1px">Intégration et livraison continues</div>
<div class="a" style="left:237px;top:649.85px;font-size:14px;line-height:14px;font-weight:normal;color:#303030;letter-spacing:0px">Opérations</div>
<div class="a" style="left:237px;top:686.85px;font-size:14px;line-height:14px;font-weight:normal;color:#303030;letter-spacing:0px">Pages</div>
<svg class="a" style="left:410px;top:684px;" width="30" height="28" viewBox="0 0 30 28"><path d="M10 9 Q10 8.3 10.7 8.3 H11.5 Q12.2 8.3 12.2 9 V13.3 L13.6 12.9 L14.6 13.6 L15.8 13.7 L16.7 14.4 L18 14.5 L19.2 15 L20 15.5 V22 Q20 22.8 19.2 22.8 H7.8 Q7 22.8 7 22 V16.5 L8.2 15.8 L10 18.3 Z" fill="#000" stroke="#fff" stroke-width="1.3" stroke-linejoin="round" paint-order="stroke"/></svg>
<div class="a" style="left:220px;top:669px;width:242px;height:52px;border:6px solid #c2160a;border-radius:4px"></div>
<div class="a" style="left:465px;top:665px;width:59px;height:59px;background:#c2160a;border-radius:50%"></div>
<div class="a" style="left:494.5px;top:680.95px;font-size:29px;line-height:29px;font-weight:bold;color:#fff;width:0;display:flex;justify-content:center">2</div>
<div class="a" style="left:238px;top:842px;width:282px;height:54px;border:6px solid #c2160a;border-radius:4px"></div>
<div class="a" style="left:530px;top:844px;width:59px;height:59px;background:#c2160a;border-radius:50%"></div>
<div class="a" style="left:559.5px;top:859.95px;font-size:29px;line-height:29px;font-weight:bold;color:#fff;width:0;display:flex;justify-content:center">1</div>
</div></body></html>
